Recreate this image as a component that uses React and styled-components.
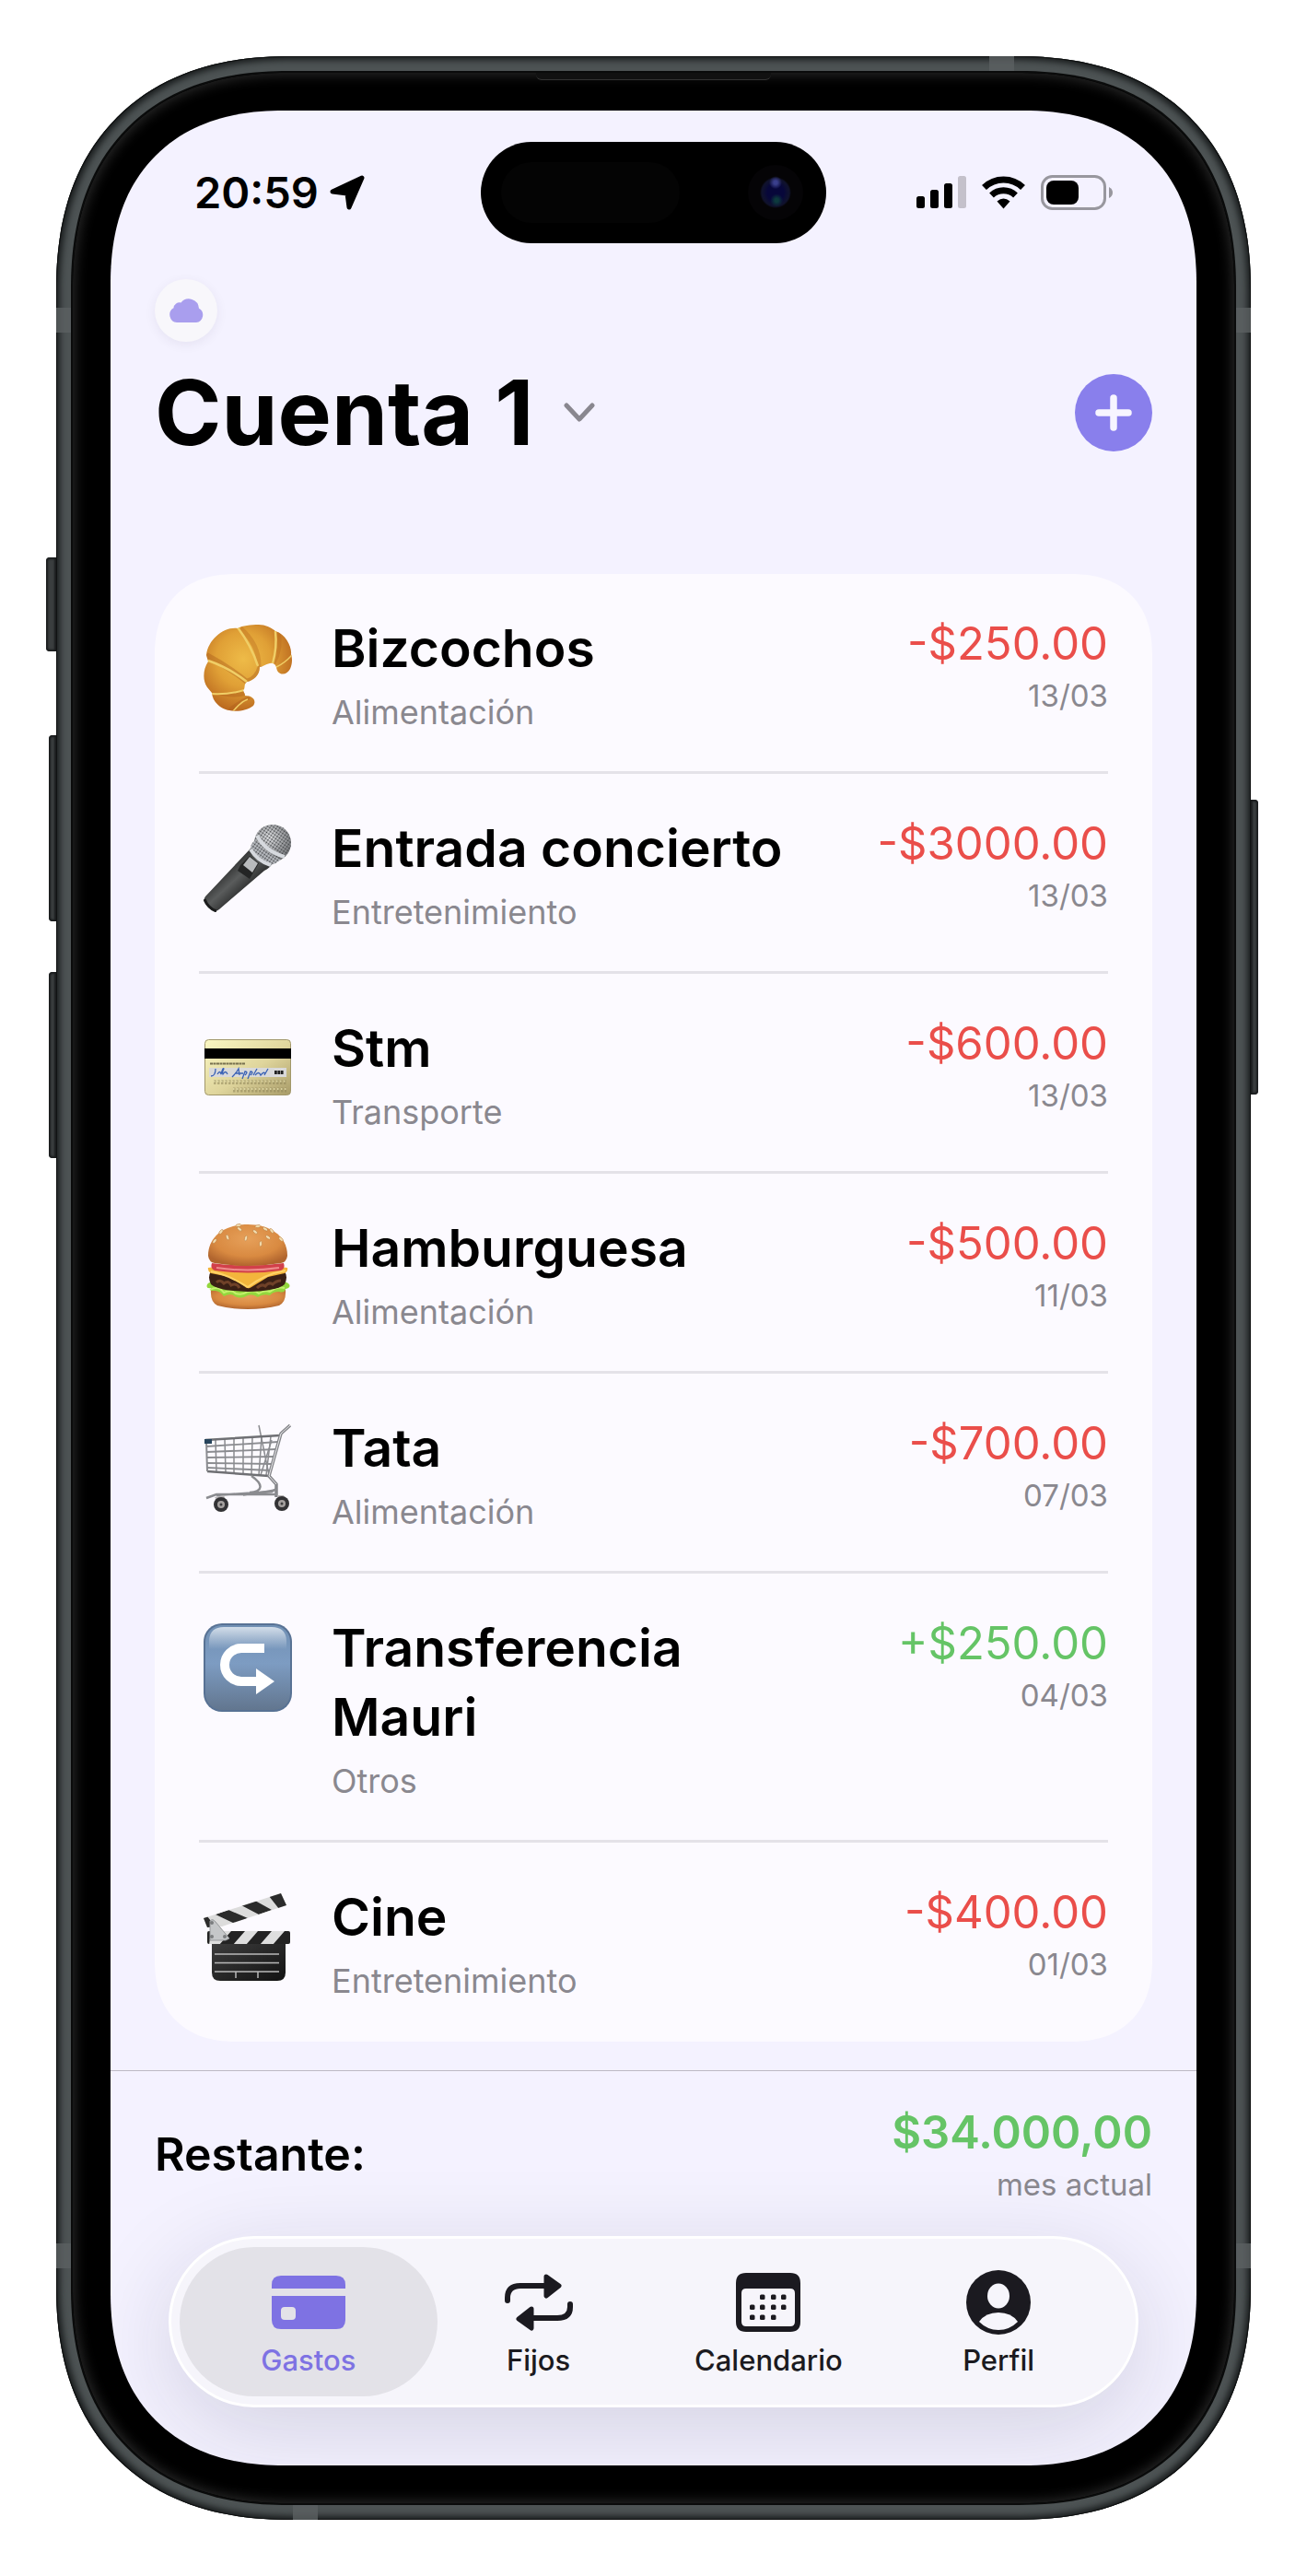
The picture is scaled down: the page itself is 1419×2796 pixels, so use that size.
import React, { useState } from "react";
import styled, { createGlobalStyle, ThemeProvider } from "styled-components";

const theme = {
  font: 'Inter, "Liberation Sans", sans-serif',
  screen: "#f4f2ff",
  card: "#fcfaff",
  line: "#e4e2e8",
  muted: "#8a888f",
  accent: "#897fec",
  red: "#ea4e4a",
  green: "#65c466",
  ink: "#1b1a20",
};

const GlobalStyle = createGlobalStyle`
  *, *::before, *::after { box-sizing: border-box; }
  body { margin: 0; background: #fff; }
  button { font: inherit; color: inherit; background: none; border: 0; padding: 0; cursor: pointer; }
  svg { display: block; flex: none; }
`;

/* ---------- device ---------- */

const Page = styled.div`
  padding: 61px;
  font-family: ${(p) => p.theme.font};
  color: #000;
`;

const Phone = styled.div`
  position: relative;
  padding: 16px;
  max-width: 1297px;
  margin: 0 auto;
  border-radius: 228px;
  background: #4d5354;
  box-shadow: inset 0 0 0 1px #101212, inset 0 0 7px 4px #191c1d;

  @supports (corner-shape: superellipse(1.2)) {
    corner-shape: superellipse(1.2);
    border-radius: 254px;
  }
`;

const Bezel = styled.div`
  position: relative;
  padding: 41px;
  border: 2px solid #0a0b0b;
  border-radius: 212px;
  background: #000;
  box-shadow: inset 0 0 14px 2px #2a2a2a;

  @supports (corner-shape: superellipse(1.2)) {
    corner-shape: superellipse(1.2);
    border-radius: 236px;
  }
`;

const SideButton = styled.span`
  position: absolute;
  top: ${(p) => p.$top}px;
  ${(p) => p.$side}: -${(p) => p.$depth}px;
  width: ${(p) => p.$depth}px;
  height: ${(p) => p.$length}px;
  border-radius: ${(p) => (p.$side === "left" ? "4px 0 0 4px" : "0 4px 4px 0")};
  background: #3a3e3f;
  box-shadow: inset 0 0 2px 2px #1a1c1d;
`;

const Antenna = styled.span`
  position: absolute;
  ${(p) => p.$edge}: 0;
  ${(p) => p.$from}: ${(p) => p.$at}px;
  width: ${(p) => (p.$edge === "left" || p.$edge === "right" ? 16 : 27)}px;
  height: ${(p) => (p.$edge === "left" || p.$edge === "right" ? 27 : 16)}px;
  background: #5b6061;
  opacity: 0.8;
`;

const Earpiece = styled.span`
  position: absolute;
  top: 0;
  left: 50%;
  width: 255px;
  height: 8px;
  margin-left: -128px;
  border-bottom: 1px solid #333;
  border-radius: 0 0 6px 6px;
  background: #111;
`;

const Screen = styled.main`
  display: flex;
  flex-direction: column;
  overflow: hidden;
  border-radius: 168px;
  background: ${(p) => p.theme.screen};

  @supports (corner-shape: superellipse(1.2)) {
    corner-shape: superellipse(1.2);
    border-radius: 188px;
  }
`;

/* ---------- status bar ---------- */

const StatusBar = styled.div`
  display: grid;
  grid-template-columns: 1fr 375px 1fr;
  align-items: center;
  padding: 34px 91px 0;
`;

const Clock = styled.div`
  display: flex;
  align-items: center;
  gap: 12px;
  font-size: 47px;
  font-weight: 600;
  line-height: 64px;
`;

const Island = styled.div`
  display: flex;
  align-items: center;
  justify-content: space-between;
  height: 110px;
  padding: 22px 25px 22px 22px;
  border-radius: 55px;
  background: #000;
`;

const Sensor = styled.span`
  width: 194px;
  height: 66px;
  border-radius: 33px;
  background: #040404;
`;

const Lens = styled.span`
  width: 60px;
  height: 60px;
  border-radius: 50%;
  background: radial-gradient(circle at 50% 32%, #3a3f8c 0 2px, transparent 7px),
    radial-gradient(circle at 52% 64%, #0d3a3d 0 2px, transparent 7px),
    radial-gradient(circle, #07073a 0 9px, #0e1030 13px, #10122c 15px, #050406 17px);
`;

const Indicators = styled.div`
  display: flex;
  align-items: center;
  justify-content: flex-end;
  gap: 17px;
`;

/* ---------- header ---------- */

const Header = styled.header`
  display: flex;
  flex-direction: column;
  align-items: flex-start;
  gap: 16px;
  padding: 39px 48px 0;
`;

const SyncBadge = styled.button`
  display: grid;
  place-items: center;
  width: 68px;
  height: 68px;
  border-radius: 50%;
  background: #f8f7fb;
  box-shadow: 0 3px 12px rgba(60, 50, 90, 0.08);
`;

const TitleRow = styled.div`
  display: flex;
  align-items: center;
  justify-content: space-between;
  width: 100%;
`;

const AccountTitle = styled.h1`
  margin: 0;
  font-size: 98px;
  font-weight: 700;
  line-height: 122px;
`;

const AccountButton = styled.button`
  display: flex;
  align-items: center;
  gap: 32px;
`;

const AddButton = styled.button`
  display: grid;
  place-items: center;
  width: 84px;
  height: 84px;
  border-radius: 50%;
  background: ${(p) => p.theme.accent};
`;

/* ---------- movements ---------- */

const Card = styled.ul`
  margin: 114px 48px 31px;
  padding: 0 48px 2px;
  list-style: none;
  border-radius: 78px;
  background: ${(p) => p.theme.card};

  @supports (corner-shape: superellipse(1.2)) {
    corner-shape: superellipse(1.2);
    border-radius: 88px;
  }
`;

const Row = styled.li`
  display: flex;
  align-items: flex-start;
  padding: 43px 0 40px;

  & + & {
    border-top: 3px solid ${(p) => p.theme.line};
  }
`;

const Emoji = styled.div`
  padding: 11px 43px 0 5px;
`;

const Details = styled.div`
  flex: 1;
  display: flex;
  flex-direction: column;
  gap: 8px;
  min-width: 0;
  padding-right: 96px;
`;

const Name = styled.h2`
  margin: 0;
  font-size: 57px;
  font-weight: 600;
  line-height: 75px;
`;

const Category = styled.p`
  margin: 0;
  font-size: 36px;
  line-height: 48px;
  color: ${(p) => p.theme.muted};
`;

const Figures = styled.div`
  display: flex;
  flex-direction: column;
  align-items: flex-end;
  white-space: nowrap;
`;

const Amount = styled.span`
  font-size: 49px;
  font-weight: ${(p) => (p.$strong ? 600 : 400)};
  line-height: 66px;
  color: ${(p) => (p.$positive ? p.theme.green : p.theme.red)};
`;

const Note = styled.span`
  font-size: 33px;
  line-height: 46px;
  color: ${(p) => p.theme.muted};
`;

/* ---------- summary and tabs ---------- */

const Summary = styled.section`
  display: flex;
  align-items: center;
  justify-content: space-between;
  padding: 34px 48px 33px;
  border-top: 1px solid #bdbac4;
`;

const SummaryLabel = styled.span`
  font-size: 50px;
  font-weight: 600;
  line-height: 66px;
`;

const TabBar = styled.nav`
  display: flex;
  margin: 0 63px 63px;
  padding: 9px;
  border: 3px solid #fff;
  border-radius: 93px;
  background: #f6f5fb;
  box-shadow: 0 24px 100px rgba(30, 25, 60, 0.15);
`;

const Tab = styled.button`
  flex: 1;
  display: flex;
  flex-direction: column;
  align-items: center;
  height: 162px;
  margin: 0 -15px;
  padding-top: 18px;
  border-radius: 81px;
  font-size: 31px;
  font-weight: 500;
  line-height: 42px;
  color: ${(p) => (p.$active ? "#7e72e3" : p.theme.ink)};
  background: ${(p) => (p.$active ? "#e3e2e8" : "transparent")};

  &:first-child { margin-left: 0; }
  &:last-child { margin-right: 0; }
`;

const TabIcon = styled.span`
  display: grid;
  place-items: center;
  height: 84px;
`;

/* ---------- drawings ---------- */

const LocationIcon = () => (
  <svg width="38" height="38" viewBox="0 0 38 38" aria-hidden="true">
    <path d="M35 3 L21 35 L19 20 L3 18 Z" fill="#000" stroke="#000" strokeWidth="5" strokeLinejoin="round" />
  </svg>
);

const SignalIcon = () => (
  <svg width="54" height="36" viewBox="0 0 54 36" aria-hidden="true">
    <rect x="0" y="22" width="9" height="13" rx="2.5" />
    <rect x="15" y="15" width="9" height="20" rx="2.5" />
    <rect x="30" y="8" width="9" height="27" rx="2.5" />
    <rect x="45" y="0" width="9" height="35" rx="2.5" fill="#c4c1cb" />
  </svg>
);

const WifiIcon = () => (
  <svg width="47" height="36" viewBox="0 0 47 36" aria-hidden="true" fill="none" stroke="#000" strokeWidth="7">
    <path d="M2.5 12.5 A30 30 0 0 1 44.500 12.500" />
    <path d="M10.500 21 A19 19 0 0 1 36.500 21" />
    <path d="M16.500 27.500 Q23.500 21.500 30.500 27.500 L23.500 35.500 Z" fill="#000" stroke="none" />
  </svg>
);

const BatteryIcon = () => (
  <svg width="78" height="38" viewBox="0 0 78 38" aria-hidden="true">
    <rect x="1.500" y="1.500" width="68" height="35" rx="11" fill="none" stroke="#98979e" strokeWidth="3" />
    <rect x="6" y="6" width="35" height="26" rx="8" />
    <path d="M74 13 Q78 15 78 19 Q78 23 74 25 Z" fill="#98979e" />
  </svg>
);

const CloudIcon = () => (
  <svg width="38" height="28" viewBox="0 0 38 28" aria-hidden="true">
    <path
      d="M9 27 A8.500 8.500 0 0 1 5.500 11.200 A6.500 6.500 0 0 1 13.500 5.500 A11 11 0 0 1 33 11.700 A8.200 8.200 0 0 1 30 27 Z"
      fill="#a99eee"
    />
  </svg>
);

const ChevronIcon = () => (
  <svg width="34" height="22" viewBox="0 0 34 22" aria-hidden="true">
    <path d="M3 3 L17 18 L31 3" fill="none" stroke="#89878f" strokeWidth="5" strokeLinecap="round" strokeLinejoin="round" />
  </svg>
);

const PlusIcon = () => (
  <svg width="40" height="40" viewBox="0 0 40 40" aria-hidden="true">
    <path d="M20 4 V36 M4 20 H36" stroke="#f7f5ff" strokeWidth="7.500" strokeLinecap="round" />
  </svg>
);

const CardTabIcon = () => (
  <svg width="80" height="58" viewBox="0 0 80 58" aria-hidden="true" fill="currentColor">
    <path d="M0 14 V10 Q0 0 10 0 H70 Q80 0 80 10 V14 Z" />
    <path
      fillRule="evenodd"
      d="M0 22 H80 V48 Q80 58 70 58 H10 Q0 58 0 48 Z M14 34 Q10 34 10 38 V44 Q10 48 14 48 H22 Q26 48 26 44 V38 Q26 34 22 34 Z"
    />
  </svg>
);

const RepeatTabIcon = () => (
  <svg width="74" height="62" viewBox="0 0 74 62" aria-hidden="true" fill="none" stroke="currentColor" strokeWidth="6" strokeLinecap="round" strokeLinejoin="round">
    <path d="M3 29 V26 Q3 13 17 13 H44" />
    <path d="M71 33 V36 Q71 48 57 48 H30" />
    <path d="M45 3 L59 13 L45 24 Z" fill="currentColor" strokeWidth="5" />
    <path d="M29 38 L15 49 L29 59 Z" fill="currentColor" strokeWidth="5" />
  </svg>
);

const CALENDAR_DOTS = [
  [29, 26], [41, 26], [52, 26],
  [18, 37], [29, 37], [41, 37], [52, 37],
  [18, 48], [29, 48], [41, 48],
];

const CalendarTabIcon = () => (
  <svg width="70" height="64" viewBox="0 0 70 64" aria-hidden="true" fill="currentColor">
    <path
      fillRule="evenodd"
      d="M11 0 H59 Q70 0 70 11 V53 Q70 64 59 64 H11 Q0 64 0 53 V11 Q0 0 11 0 Z M11 17 Q6 17 6 22 V53 Q6 58 11 58 H59 Q64 58 64 53 V22 Q64 17 59 17 Z"
    />
    {CALENDAR_DOTS.map(([x, y]) => (
      <rect key={`${x}-${y}`} x={x - 3} y={y - 2.5} width="5.500" height="5.500" rx="1.500" />
    ))}
  </svg>
);

const ProfileTabIcon = () => (
  <svg width="70" height="70" viewBox="0 0 70 70" aria-hidden="true">
    <circle cx="35" cy="35" r="35" fill="currentColor" />
    <ellipse cx="35" cy="28" rx="12" ry="13.500" fill="#f6f5fb" />
    <path d="M14 56 Q21 46 35 46 Q49 46 56 56 Q47 65 35 65 Q23 65 14 56 Z" fill="#f6f5fb" />
  </svg>
);

const EmojiSvg = ({ label, children }) => (
  <svg width="96" height="96" viewBox="0 0 96 96" role="img" aria-label={label}>
    {children}
  </svg>
);

const Croissant = () => (
  <EmojiSvg label="Croissant">
    <defs>
      <radialGradient id="cr" cx="0.450" cy="0.400" r="0.620">
        <stop offset="0" stopColor="#eebb48" />
        <stop offset="0.500" stopColor="#e0a036" />
        <stop offset="1" stopColor="#b8651d" />
      </radialGradient>
      <clipPath id="cr-clip">
        <path d="M60 1 C51 1 42 2 37 5 C22 3 5 17 3 34 L5 41 C-1 50 -1 62 4 69 L9 75 C10 86 20 93 28 94 C36 96 48 94 54 89 C58 83 53 78 45 78 C45 75 43 74 43 72 C46 70 43 66 47 63 C54 62 61 56 61 47 C65 47 70 42 75 43 C79 44 79 48 80 51 C84 57 91 55 94 49 C97 42 96 36 95 33 C96 25 89 11 78 8 C73 4 67 1 60 1 Z" />
      </clipPath>
    </defs>
    <g clipPath="url(#cr-clip)">
      <rect width="96" height="96" fill="url(#cr)" />
      <path d="M3 34 Q26 46 47 63 Q58 60 62 46" fill="none" stroke="#a04f16" strokeWidth="6" opacity="0.350" />
      <path d="M9 75 Q24 78 43 72 L46 78 Q30 82 9 75" fill="#b0601c" opacity="0.450" />
      <path d="M28 94 Q40 84 50 80" fill="none" stroke="#b0601c" strokeWidth="4" opacity="0.450" />
      <path d="M40 5 Q60 22 60 46 M81 9 Q85 26 76 43" fill="none" stroke="#b5641c" strokeWidth="5" opacity="0.350" />
      <g fill="none" stroke="#f0ce66" strokeWidth="2.500">
        <path d="M37 4 Q52 24 59 46" />
        <path d="M78 8 Q80 26 75 43" />
        <path d="M96 34 Q88 43 79 47" strokeWidth="1.500" />
        <path d="M5 40 Q28 48 47 63" />
        <path d="M9 76 Q28 77 44 72" strokeWidth="2" />
        <path d="M32 95 Q40 85 48 82" strokeWidth="1.500" />
      </g>
    </g>
  </EmojiSvg>
);

const Microphone = () => (
  <EmojiSvg label="Micrófono">
    <defs>
      <linearGradient id="mic-b" x1="0.300" y1="0.300" x2="0.700" y2="0.700">
        <stop offset="0" stopColor="#2a2b2b" />
        <stop offset="0.450" stopColor="#5a5c5c" />
        <stop offset="1" stopColor="#1f2020" />
      </linearGradient>
      <radialGradient id="mic-h" cx="0.400" cy="0.350" r="0.700">
        <stop offset="0" stopColor="#f0f1f3" />
        <stop offset="1" stopColor="#77797c" />
      </radialGradient>
      <pattern id="mic-p" width="3" height="3" patternUnits="userSpaceOnUse" patternTransform="rotate(35)">
        <circle cx="1.500" cy="1.500" r="1" fill="#3c3e42" />
      </pattern>
    </defs>
    <path d="M51 27 L74 44 Q72 48 66 51 L17 93 Q13 97 8 92 L2 87 Q-1 83 2 79 Z" fill="url(#mic-b)" />
    <path d="M1 82 Q5 92 14 95" fill="none" stroke="#1b1c1c" strokeWidth="3" />
    <circle cx="75" cy="21" r="20" fill="url(#mic-h)" />
    <circle cx="75" cy="21" r="20" fill="url(#mic-p)" />
    <path d="M56 18 Q50 23 51 29 Q58 41 73 45 Q79 43 84 39 Q66 32 56 18 Z" fill="#c2c5ca" />
    <path d="M56 18 Q50 23 51 29 Q58 41 73 45 Q79 43 84 39 Q66 32 56 18 Z" fill="url(#mic-p)" />
    <path d="M58 13 Q67 30 88 36 M51 28 Q59 41 73 45" fill="none" stroke="#d6d9de" strokeWidth="4" />
    <path d="M40 45 L50 35 L60 43 L50 60 L37 51 Z" fill="#242525" />
    <path d="M43 45 L50 36 L59 43 L53 53 Z" fill="#b9bbbd" />
  </EmojiSvg>
);

const CreditCard = () => (
  <EmojiSvg label="Tarjeta">
    <defs>
      <linearGradient id="cc" x1="0" y1="0" x2="1" y2="1">
        <stop offset="0" stopColor="#fbf8c4" />
        <stop offset="0.550" stopColor="#dfd59c" />
        <stop offset="1" stopColor="#a89b68" />
      </linearGradient>
    </defs>
    <rect x="1.500" y="17.500" width="93" height="60" rx="4" fill="url(#cc)" stroke="#a1976a" />
    <rect x="1" y="27" width="94" height="11" fill="#000" />
    <rect x="6" y="48" width="84" height="10" fill="#d9d9da" />
    <path d="M7 43.500 H45" stroke="#77704f" strokeWidth="2" strokeDasharray="3 0.500" />
    <path
      d="M8 57 Q13 57 13 49 M15 55 q3 -5 4 0 q2 -8 3 -6 q-2 4 -1 6 q3 -5 5 0 M31 58 Q36 53 38 49 L39 56 M34 54 H43 M42 60 L45 52 q4 0 0 4 M48 60 L51 52 q4 0 0 4 M54 56 L58 49 M56 56 q4 -5 6 0 q4 -5 5 -1 M66 56 L70 49"
      fill="none"
      stroke="#3a62b5"
      strokeWidth="1.300"
    />
    <path d="M77 53 H87" stroke="#222" strokeWidth="4" strokeDasharray="2.800 0.600" />
    <g stroke="#8f8558" opacity="0.550">
      <path d="M11 63.500 H90" strokeWidth="5" strokeDasharray="2.500 1.500" />
      <path d="M32 72 H90" strokeWidth="5" strokeDasharray="2.500 1.500" />
    </g>
    <g stroke="#f2ebb8" opacity="0.700">
      <path d="M11 62.500 H90" strokeWidth="2" strokeDasharray="1.500 2.500" />
      <path d="M32 71 H90" strokeWidth="2" strokeDasharray="1.500 2.500" />
    </g>
  </EmojiSvg>
);

const Burger = () => (
  <EmojiSvg label="Hamburguesa">
    <defs>
      <radialGradient id="bun" cx="0.500" cy="0.350" r="0.650">
        <stop offset="0" stopColor="#e6a05a" />
        <stop offset="0.650" stopColor="#d98a41" />
        <stop offset="1" stopColor="#b1652e" />
      </radialGradient>
    </defs>
    <path d="M8 72 H89 Q90 85 82 89 Q66 93 48 93 Q30 93 15 89 Q7 85 8 72 Z" fill="url(#bun)" />
    <path d="M4 66 Q10 58 48 62 Q86 58 93 66 Q95 70 89 71 Q88 76 82 74 Q75 74 72 78 Q64 76 59 80 Q52 75 46 79 Q40 82 34 79 Q30 75 22 79 Q17 72 11 73 Q6 73 8 70 Q2 71 4 66 Z" fill="#93d73e" />
    <path d="M7 72 Q16 67 22 75 Q30 71 35 76 Q42 78 48 74 Q56 72 60 76 Q66 72 72 74 Q80 68 88 70" fill="none" stroke="#c4f06c" strokeWidth="2" />
    <path d="M8 52 Q48 46 88 52 Q92 58 88 66 Q80 73 48 74 Q16 73 8 66 Q4 58 8 52 Z" fill="#3a2015" />
    <path d="M14 64 q4 -4 8 1 q5 -4 8 2 q6 -3 9 3 M58 70 q5 -5 9 -2 q4 -5 8 -2 q4 -4 9 -4" fill="none" stroke="#6f4128" strokeWidth="3" />
    <path d="M5 48 Q48 42 91 48 Q92 52 88 54 L70 58 L52 69 Q48 72 44 68 L28 58 L8 54 Q4 51 5 48 Z" fill="#f3b53c" />
    <path d="M8 52 Q26 55 48 69 Q66 55 89 51" fill="none" stroke="#ffd367" strokeWidth="2" />
    <path d="M9 43 Q48 48 87 43 Q89 49 84 51 Q48 56 12 51 Q7 49 9 43 Z" fill="#d2404a" />
    <path d="M14 48 Q48 53 82 48" fill="none" stroke="#ee8c8c" strokeWidth="2" />
    <path d="M5 35 C5 12 26 1 48 1 C70 1 91 12 91 35 Q90 42 84 43 Q48 49 12 43 Q6 42 5 35 Z" fill="url(#bun)" />
    <g fill="#f2dcae" stroke="#b9793a" strokeWidth="0.500">
      {[[39, 6, -50], [26, 15, -20], [12, 19, 40], [46, 16, 15], [56, 9, -50], [62, 22, 5], [70, 15, -55], [74, 8, -40], [19, 9, 40], [59, 3, 80], [38, 2, 80], [84, 17, -45], [67, 6, -60]].map(([x, y, r]) => (
        <ellipse key={`${x}-${y}`} cx={x} cy={y} rx="1.500" ry="3" transform={`rotate(${r} ${x} ${y})`} />
      ))}
    </g>
  </EmojiSvg>
);

const Cart = () => (
  <EmojiSvg label="Carrito">
    <g fill="none" stroke="#8b8c90">
      <path d="M3 25 L81 20 M3 31 L79 28 M3 37 L77 36 M4 43 L75 44 M4 48 L73 51" strokeWidth="1.800" />
      <path d="M13 18 L14 53 M23 17 L24 53 M33 17 L33 54 M43 16 L43 55 M53 15 L52 55 M63 15 L60 56 M73 14 L68 56" strokeWidth="1.500" />
      <path d="M60 2 L71 56 M74 18 L62 56" strokeWidth="1.500" />
      <path d="M2 18 L83 13 M4 52 L71 57" strokeWidth="2.500" stroke="#6f7074" />
      <path d="M3 18 L4 52" strokeWidth="2" />
      <path d="M94 2 L84 11 L71 57 L79 66 V80" strokeWidth="3.500" stroke="#85868a" strokeLinejoin="round" />
      <path d="M94 2 L84 11 L71 57 L79 66" strokeWidth="1" stroke="#e8e8ea" />
      <path d="M52 57 C65 66 65 74 50 75 M79 71 L74 74 L14 78 M3 81 L14 77 H80" strokeWidth="2.500" />
      <path d="M43 78 L77 72" strokeWidth="1.500" />
    </g>
    <rect x="1" y="17" width="8" height="5" fill="#27445c" />
    <path d="M12 80 L22 78 L25 86 H16 Z M80 78 H87 L90 86 L80 88 Z" fill="#b6b3b5" />
    {[[19, 88], [85, 87]].map(([x, y]) => (
      <g key={x}>
        <circle cx={x} cy={y} r="8" fill="#333335" />
        <circle cx={x} cy={y} r="4" fill="#a5a19f" />
        <circle cx={x} cy={y} r="1.500" fill="#3d3d3f" />
      </g>
    ))}
  </EmojiSvg>
);

const TransferArrow = () => (
  <EmojiSvg label="Transferencia">
    <defs>
      <linearGradient id="ar" x1="0" y1="0" x2="0" y2="1">
        <stop offset="0" stopColor="#7190b4" />
        <stop offset="0.450" stopColor="#7d9cc2" />
        <stop offset="1" stopColor="#62768f" />
      </linearGradient>
      <linearGradient id="ar-g" x1="0" y1="0" x2="0" y2="1">
        <stop offset="0" stopColor="#d3deea" />
        <stop offset="1" stopColor="#d3deea" stopOpacity="0" />
      </linearGradient>
    </defs>
    <rect width="96" height="96" rx="20" fill="#587294" />
    <rect x="2" y="2" width="92" height="92" rx="18" fill="url(#ar)" />
    <path d="M6 28 V20 Q6 4 22 4 H74 Q90 4 90 20 V28 Z" fill="url(#ar-g)" />
    <path d="M66 27 H41 A18 18 0 0 0 41 63 H60" fill="none" stroke="#fff" strokeWidth="10" />
    <path d="M57 49 L77 63 L57 77 Z" fill="#fff" />
  </EmojiSvg>
);

const Clapper = () => (
  <EmojiSvg label="Claqueta">
    <defs>
      <linearGradient id="cl" x1="0" y1="0" x2="1" y2="1">
        <stop offset="0" stopColor="#3c3c3c" />
        <stop offset="1" stopColor="#121212" />
      </linearGradient>
      <clipPath id="cl-top"><path d="M0 28 L84 1 L90 14 L20 37 L4 38 Z" /></clipPath>
      <clipPath id="cl-mid"><rect x="4" y="42" width="90" height="14" rx="2" /></clipPath>
    </defs>
    <g clipPath="url(#cl-top)">
      <rect width="96" height="40" fill="#dcdcdc" />
      <path d="M71 4 L86 -1 L92 14 L82 18 Z M41 14 L56 9 L74 19 L60 24 Z M13 24 L27 19 L48 28 L34 34 Z M-2 28 L4 26 L12 36 L2 40 Z" fill="#2b2b2b" />
    </g>
    <g clipPath="url(#cl-mid)">
      <rect x="4" y="42" width="90" height="14" fill="#dedede" />
      <path d="M4 42 H8 L6 57 H4 Z M30 42 H45 L32 57 H17 Z M59 42 H74 L61 57 H46 Z M88 42 H96 V57 H75 Z" fill="#232323" />
    </g>
    <path d="M9 56 H89 V87 Q89 96 80 96 H18 Q9 96 9 87 Z" fill="url(#cl)" />
    <path d="M12 67 H82 M12 76.500 H82 M12 86 H82 M35 86 V93 M59 86 V93" stroke="#b9b9b9" strokeWidth="1.500" />
    <path d="M7 31 Q10 28 13 32 L28 50 L24 52 H7 Z" fill="#c5c7c9" stroke="#96989a" />
    <g fill="#7b7d7f">
      <circle cx="9" cy="33" r="2" />
      <circle cx="9" cy="48" r="2" />
      <circle cx="23" cy="48" r="2" />
    </g>
  </EmojiSvg>
);

/* ---------- content ---------- */

const MOVEMENTS = [
  { icon: Croissant, name: "Bizcochos", category: "Alimentación", amount: "-$250.00", date: "13/03" },
  { icon: Microphone, name: "Entrada concierto", category: "Entretenimiento", amount: "-$3000.00", date: "13/03" },
  { icon: CreditCard, name: "Stm", category: "Transporte", amount: "-$600.00", date: "13/03" },
  { icon: Burger, name: "Hamburguesa", category: "Alimentación", amount: "-$500.00", date: "11/03" },
  { icon: Cart, name: "Tata", category: "Alimentación", amount: "-$700.00", date: "07/03" },
  { icon: TransferArrow, name: "Transferencia Mauri", category: "Otros", amount: "+$250.00", date: "04/03" },
  { icon: Clapper, name: "Cine", category: "Entretenimiento", amount: "-$400.00", date: "01/03" },
];

const TABS = [
  { label: "Gastos", icon: CardTabIcon },
  { label: "Fijos", icon: RepeatTabIcon },
  { label: "Calendario", icon: CalendarTabIcon },
  { label: "Perfil", icon: ProfileTabIcon },
];

export default function App() {
  const [tab, setTab] = useState("Gastos");

  return (
    <ThemeProvider theme={theme}>
      <GlobalStyle />
      <Page>
        <Phone>
          <SideButton $side="left" $top={544} $depth={11} $length={102} />
          <SideButton $side="left" $top={737} $depth={8} $length={202} />
          <SideButton $side="left" $top={994} $depth={8} $length={202} />
          <SideButton $side="right" $top={807} $depth={8} $length={320} />
          <Antenna $edge="left" $from="top" $at={273} />
          <Antenna $edge="right" $from="top" $at={273} />
          <Antenna $edge="left" $from="bottom" $at={273} />
          <Antenna $edge="right" $from="bottom" $at={273} />
          <Antenna $edge="top" $from="right" $at={257} />
          <Antenna $edge="bottom" $from="left" $at={257} />
          <Bezel>
            <Earpiece />
            <Screen>
              <StatusBar>
                <Clock>
                  <span>20:59</span>
                  <LocationIcon />
                </Clock>
                <Island>
                  <Sensor />
                  <Lens />
                </Island>
                <Indicators>
                  <SignalIcon />
                  <WifiIcon />
                  <BatteryIcon />
                </Indicators>
              </StatusBar>

              <Header>
                <SyncBadge aria-label="Sincronización">
                  <CloudIcon />
                </SyncBadge>
                <TitleRow>
                  <AccountTitle>
                    <AccountButton>
                      Cuenta 1
                      <ChevronIcon />
                    </AccountButton>
                  </AccountTitle>
                  <AddButton aria-label="Agregar">
                    <PlusIcon />
                  </AddButton>
                </TitleRow>
              </Header>

              <Card>
                {MOVEMENTS.map(({ icon: Icon, name, category, amount, date }) => (
                  <Row key={name}>
                    <Emoji>
                      <Icon />
                    </Emoji>
                    <Details>
                      <Name>{name}</Name>
                      <Category>{category}</Category>
                    </Details>
                    <Figures>
                      <Amount $positive={amount.startsWith("+")}>{amount}</Amount>
                      <Note>{date}</Note>
                    </Figures>
                  </Row>
                ))}
              </Card>

              <Summary>
                <SummaryLabel>Restante:</SummaryLabel>
                <Figures>
                  <Amount $positive $strong>$34.000,00</Amount>
                  <Note>mes actual</Note>
                </Figures>
              </Summary>

              <TabBar>
                {TABS.map(({ label, icon: Icon }) => (
                  <Tab key={label} $active={tab === label} onClick={() => setTab(label)}>
                    <TabIcon>
                      <Icon />
                    </TabIcon>
                    {label}
                  </Tab>
                ))}
              </TabBar>
            </Screen>
          </Bezel>
        </Phone>
      </Page>
    </ThemeProvider>
  );
}
